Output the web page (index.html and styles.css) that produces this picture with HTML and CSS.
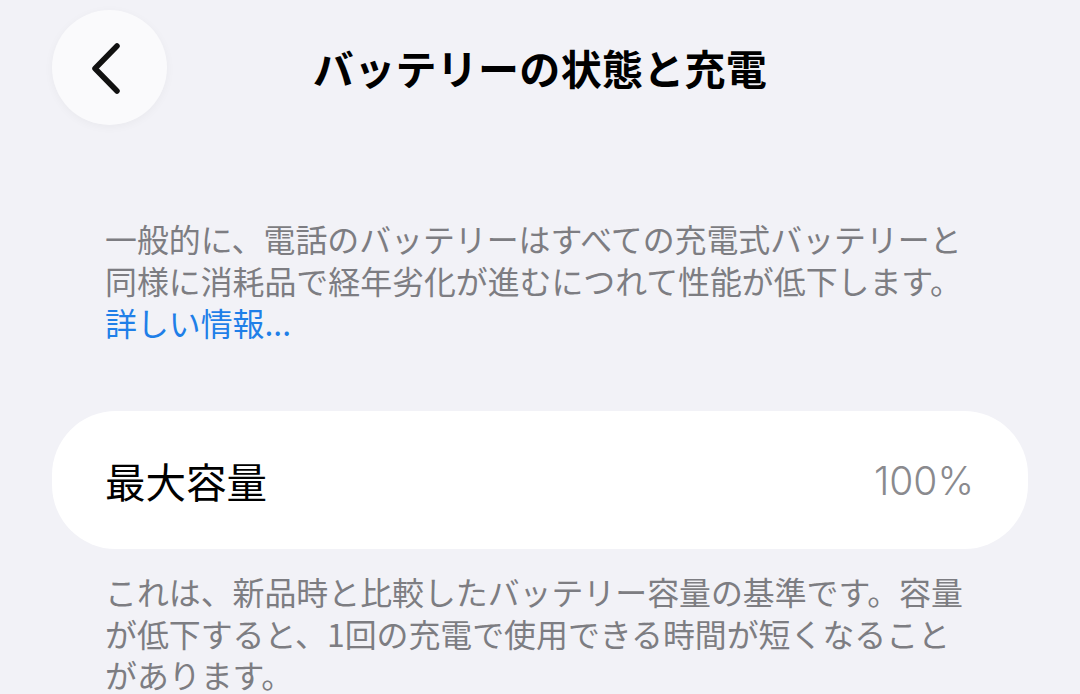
FILE: index.html
```html
<!DOCTYPE html>
<html lang="ja">
<head>
<meta charset="utf-8">
<link rel="stylesheet" href="styles.css">
</head>
<body>
<div class="page">
  <header class="nav">
    <div class="nav-left">
      <button class="back" aria-label="戻る">
        <svg width="40" height="60" viewBox="0 0 40 60" class="chev"><path d="M32 8 L10 30.5 L32 53" fill="none" stroke="#111" stroke-width="5.5" stroke-linecap="round" stroke-linejoin="round"/></svg>
      </button>
    </div>
    <h1 class="title">バッテリーの状態と充電</h1>
    <div class="nav-right"></div>
  </header>

  <p class="note first">一般的に、電話のバッテリーはすべての充電式バッテリーと<br>同様に消耗品で経年劣化が進むにつれて性能が低下します。<br><span class="link">詳しい情報...</span></p>

  <div class="card">
    <span class="label">最大容量</span>
    <span class="value">100%</span>
  </div>

  <p class="note second">これは、新品時と比較したバッテリー容量の基準です。容量<br>が低下すると、1回の充電で使用できる時間が短くなること<br>があります。</p>
</div>
</body>
</html>
```
FILE: styles.css
```css
html, body {
  margin: 0;
  padding: 0;
  background: #f2f2f7;
}
body {
  font-family: "Noto Sans CJK JP", "Noto Sans", sans-serif;
  width: 1080px;
  height: 694px;
  overflow: hidden;
}
.page {
  padding: 10px 52px 0 52px;
}
.nav {
  display: grid;
  grid-template-columns: 1fr auto 1fr;
  align-items: center;
  height: 115px;
}
.back {
  width: 115px;
  height: 115px;
  border-radius: 50%;
  border: none;
  background: #fafafc;
  box-shadow: 0 2px 10px rgba(0,0,0,0.04);
  display: flex;
  align-items: center;
  justify-content: center;
  padding: 0;
}
.chev {
  margin-left: -10px;
}
.title {
  margin: 0;
  font-size: 41px;
  font-weight: 700;
  color: #000;
  letter-spacing: 0.3px;
  line-height: 1;
}
.note {
  margin: 0;
  padding-left: 53px;
  font-size: 31.9px;
  color: #7d7d82;
  line-height: 42px;
}
.note.first {
  margin-top: 92px;
}
.link {
  color: #1f7fe8;
}
.card {
  margin-top: 68px;
  height: 138px;
  background: #ffffff;
  border-radius: 64px;
  display: flex;
  align-items: center;
  justify-content: space-between;
  padding: 0 54px 0 53px;
  box-sizing: border-box;
}
.label {
  font-size: 40.5px;
  color: #000;
}
.value {
  font-family: "Inter", "Noto Sans", sans-serif;
  font-size: 39px;
  font-weight: 300;
  color: #8a8a8e;
}
.note.second {
  margin-top: 22px;
  line-height: 41.5px;
}
```
